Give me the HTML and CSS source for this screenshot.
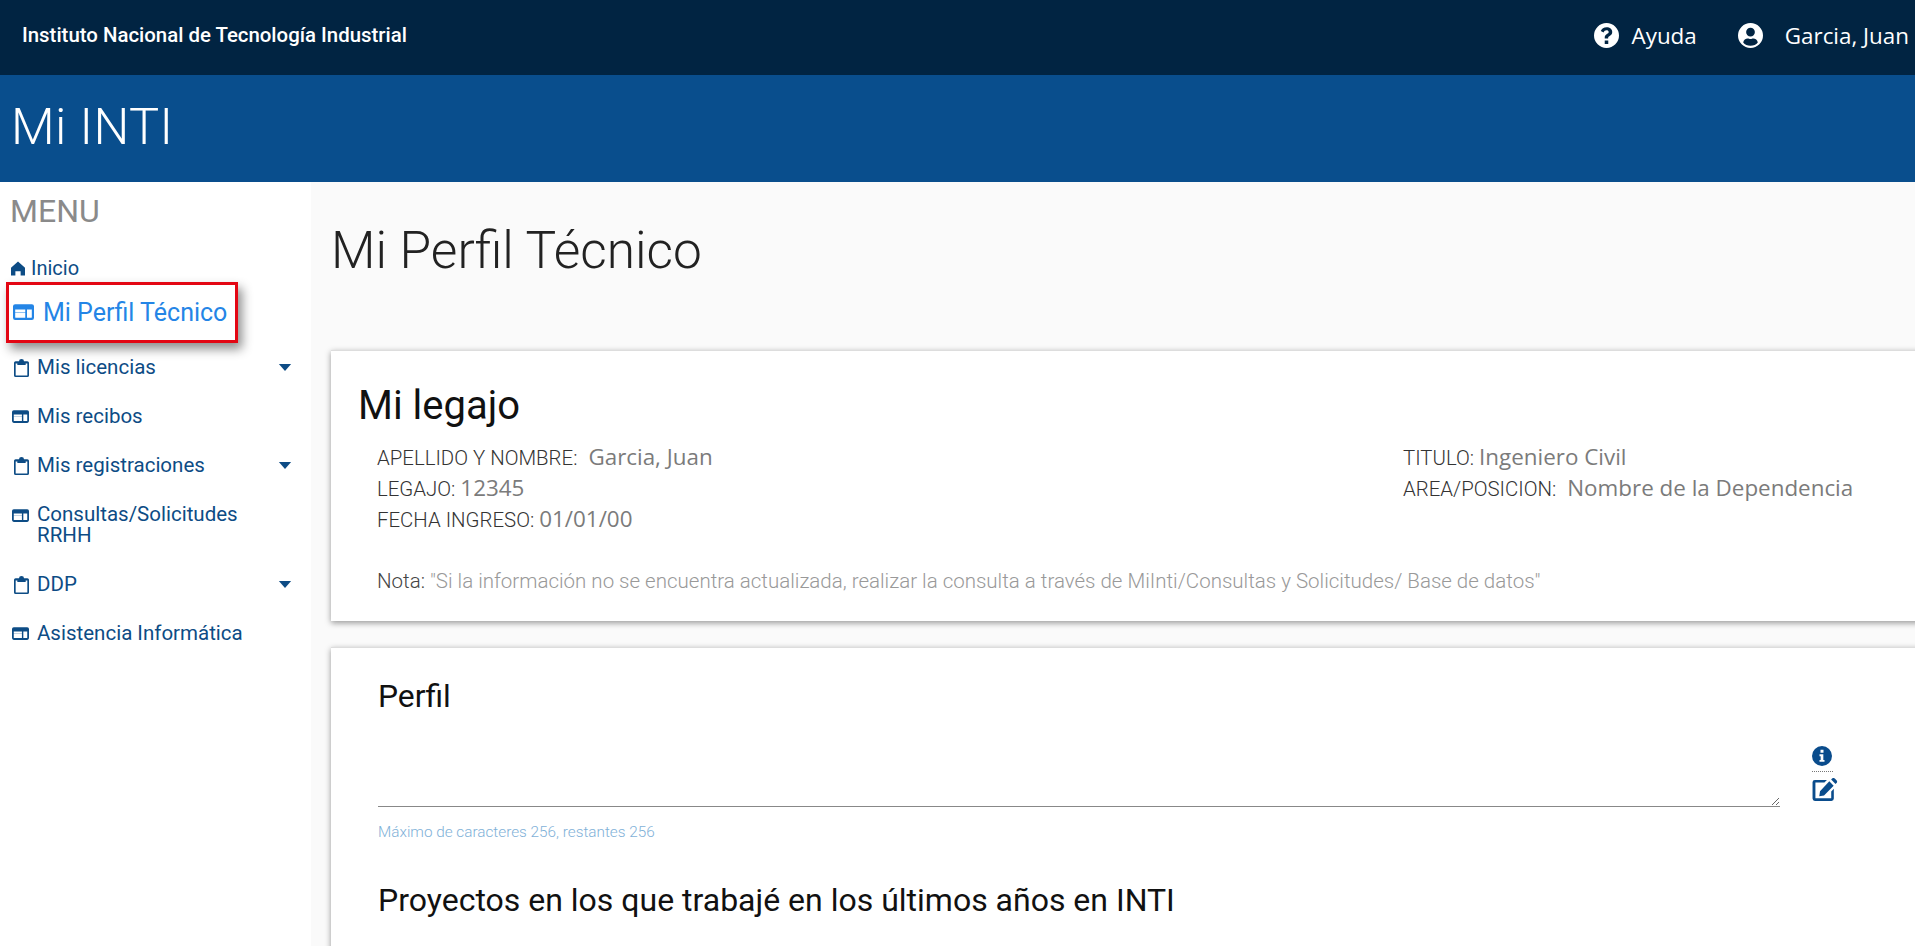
FILE: index.html
```html
<!DOCTYPE html>
<html lang="es">
<head>
<meta charset="utf-8">
<title>Mi INTI</title>
<link rel="stylesheet" href="styles.css">
</head>
<body>
<svg class="defs" width="0" height="0" aria-hidden="true">
  <symbol id="i-window" viewBox="0 0 24 18"><path fill-rule="evenodd" d="M2.5 0h19A2.5 2.5 0 0 1 24 2.5v13a2.5 2.5 0 0 1-2.5 2.500h-19A2.500 2.500 0 0 1 0 15.500v-13A2.500 2.500 0 0 1 2.500 0ZM2.500 6v9a.5.5 0 0 0 .5.500h11V9.500H2.500V9h11.500V6ZM16 6v9.500h5a.5.500 0 0 0 .5-.5V6Z"/></symbol>
  <symbol id="i-clip" viewBox="0 0 18 24" preserveAspectRatio="none"><path fill-rule="evenodd" d="M2 3h4a3 3 0 0 1 6 0h4a2 2 0 0 1 2 2v17a2 2 0 0 1-2 2H2a2 2 0 0 1-2-2V5a2 2 0 0 1 2-2Zm0 3v16h14V6h-2v2H4V6Z"/></symbol>
  <symbol id="i-caret" viewBox="0 0 14 8"><path d="M0 0h14L7 8Z"/></symbol>
</svg>
<header class="topbar">
  <span class="org">Instituto Nacional de Tecnología Industrial</span>
  <nav class="toplinks">
    <a class="toplink">
      <svg class="topicon" viewBox="0 0 24 24"><path fill="#fff" fill-rule="evenodd" d="M12 0a12 12 0 1 1 0 24 12 12 0 0 1 0-24Zm-1.700 16.800v3.400h3.400v-3.400Zm1.900-12.600c-2.900 0-4.800 1.300-5.700 3.600l2.700 1.200c.6-1.300 1.400-2 2.800-2 1.200 0 2.100.6 2.100 1.600 0 .9-.7 1.400-1.700 2-1.300.8-2.100 1.700-2.100 3.400v.9h3.300v-.6c0-.8.500-1.200 1.400-1.800 1.400-.9 2.500-1.900 2.500-3.900 0-2.700-2.300-4.400-5.300-4.400Z"/></svg>
      Ayuda
    </a>
    <a class="toplink toplink-user">
      <svg class="topicon" viewBox="0 0 24 24"><path fill="#fff" fill-rule="evenodd" d="M12 0a12 12 0 1 1 0 24 12 12 0 0 1 0-24Zm0 4.500a4.200 4.200 0 1 0 0 8.400 4.200 4.200 0 0 0 0-8.400ZM5 18.600C6.600 20.600 9.100 21.800 12 21.800s5.400-1.200 7-3.200c-.4-2.200-2.200-3.700-4.400-3.700-.8 0-1.500.5-2.600.5s-1.800-.5-2.600-.5c-2.200 0-4 1.500-4.400 3.700Z"/></svg>
      Garcia, Juan
    </a>
  </nav>
</header>
<div class="brandbar">Mi INTI</div>
<div class="layout">
  <aside class="sidebar">
    <div class="menu-title">MENU</div>
    <ul class="menu">
      <li class="item item-home">
        <svg class="ic-home" viewBox="0 0 16 16"><path d="M8 0 16 7v9h-5v-5H5v5H0V7Z"/></svg>
        <span>Inicio</span>
      </li>
      <li class="item item-active">
        <svg class="ic-win-big"><use href="#i-window"/></svg>
        <span>Mi Perfil Técnico</span>
      </li>
      <li class="item">
        <svg class="ic-clip"><use href="#i-clip"/></svg>
        <span class="grow">Mis licencias</span>
        <svg class="ic-caret"><use href="#i-caret"/></svg>
      </li>
      <li class="item">
        <svg class="ic-win"><use href="#i-window"/></svg>
        <span class="grow">Mis recibos</span>
      </li>
      <li class="item">
        <svg class="ic-clip"><use href="#i-clip"/></svg>
        <span class="grow">Mis registraciones</span>
        <svg class="ic-caret"><use href="#i-caret"/></svg>
      </li>
      <li class="item item-two">
        <svg class="ic-win"><use href="#i-window"/></svg>
        <span class="two-lines">Consultas/Solicitudes RRHH</span>
      </li>
      <li class="item">
        <svg class="ic-clip"><use href="#i-clip"/></svg>
        <span class="grow">DDP</span>
        <svg class="ic-caret"><use href="#i-caret"/></svg>
      </li>
      <li class="item">
        <svg class="ic-win"><use href="#i-window"/></svg>
        <span class="grow">Asistencia Informática</span>
      </li>
    </ul>
  </aside>
  <main class="content">
    <h1 class="page-title">Mi Perfil Técnico</h1>
    <section class="card card-legajo">
      <h2 class="card-title">Mi legajo</h2>
      <div class="info-grid">
        <div class="info-col">
          <p class="info"><span class="lab">APELLIDO Y NOMBRE:</span> <span class="val val-wide">Garcia, Juan</span></p>
          <p class="info"><span class="lab">LEGAJO:</span> <span class="val">12345</span></p>
          <p class="info"><span class="lab">FECHA INGRESO:</span> <span class="val">01/01/00</span></p>
        </div>
        <div class="info-col">
          <p class="info"><span class="lab">TITULO:</span> <span class="val">Ingeniero Civil</span></p>
          <p class="info"><span class="lab">AREA/POSICION:</span> <span class="val val-wide">Nombre de la Dependencia</span></p>
        </div>
      </div>
      <p class="note"><span class="note-lab">Nota:</span> "Si la información no se encuentra actualizada, realizar la consulta a través de MiInti/Consultas y Solicitudes/ Base de datos"</p>
    </section>
    <section class="card card-perfil">
      <h3 class="sub-title">Perfil</h3>
      <div class="field-row">
        <textarea class="field" aria-label="Perfil"></textarea>
        <div class="field-icons">
          <svg class="ic-info" viewBox="0 0 24 24"><path fill="#0a4c8c" fill-rule="evenodd" d="M12 0a12 12 0 1 1 0 24 12 12 0 0 1 0-24Zm-1.800 4.500v3.500h3.600V4.500ZM9 10v2.400h1.400v4.300H9V19h6v-2.300h-1.400V10Z"/></svg>
          <span class="ic-dots"></span>
          <svg class="ic-edit" viewBox="0 0 26 24"><path fill="#0a4c8c" d="M2.500 2H15l-2.600 2.800H3v16.400h16.500V14l2.700-2.800v10.300A2.500 2.500 0 0 1 19.700 24H2.500A2.500 2.500 0 0 1 0 21.500v-17A2.500 2.500 0 0 1 2.500 2Z"/><path fill="#0a4c8c" d="M17.500 3.500 22 8 12 18.200l-5 .8.800-5.200ZM19.400 1.600l1-1a2 2 0 0 1 2.800 0l1.800 1.800a2 2 0 0 1 0 2.800l-1 1Z"/></svg>
        </div>
      </div>
      <p class="hint">Máximo de caracteres 256, restantes 256</p>
      <h3 class="sub-title sub-projects">Proyectos en los que trabajé en los últimos años en INTI</h3>
    </section>
  </main>
</div>
</body>
</html>
```
FILE: styles.css
```css
* { box-sizing: border-box; }
html, body { height: 100%; }
body {
  margin: 0;
  height: 946px;
  overflow: hidden;
  background: #fff;
  font-family: Roboto, "Liberation Sans", sans-serif;
  display: flex;
  flex-direction: column;
}
.defs { position: absolute; }

.topbar {
  flex: 0 0 75px;
  background: #012442;
  color: #fff;
  display: flex;
  align-items: center;
  justify-content: space-between;
  padding: 0 6px 5px 22px;
}
.org { font-size: 20.4px; font-weight: 500; }
.toplinks { display: flex; gap: 41px; }
.toplink {
  display: flex;
  align-items: center;
  gap: 13px;
  font-family: "Open Sans", sans-serif;
  font-size: 22.4px;
}
.toplink-user { gap: 22px; }
.topicon { width: 25px; height: 25px; }

.brandbar {
  flex: 0 0 107px;
  background: #094e8d;
  color: #fff;
  font-size: 50.5px;
  font-weight: 300;
  padding: 0 0 5px 11px;
  display: flex;
  align-items: center;
  letter-spacing: 0.4px;
}

.layout { flex: 1; display: flex; min-height: 0; }

.sidebar { flex: 0 0 311px; padding-top: 12px; }
.menu-title {
  font-size: 32px;
  color: #8a8a8a;
  padding-left: 10px;
  line-height: 34px;
  height: 58px;
}
.menu {
  list-style: none;
  margin: 0;
  padding: 0;
  height: 388px;
  overflow: hidden;
  color: #0d4c85;
  font-size: 20.5px;
}
.item {
  display: flex;
  align-items: center;
  padding: 13px 0 13px 13px;
  line-height: 23px;
  fill: #0d4c85;
}
.item-two { line-height: 21px; padding-top: 14px; padding-bottom: 14px; }
.item-home { padding: 5px 0 2px 11px; font-size: 20px; }
.item-active {
  margin-left: 6px;
  width: 232px;
  height: 61px;
  padding: 0 0 1px 4px;
  border: 3px solid #e30613;
  box-shadow: 4px 6px 10px rgba(0, 0, 0, .45);
  color: #2485e6;
  fill: #2485e6;
  font-size: 25px;
  background: #fff;
}
.grow { flex: 1; }
.two-lines { width: 215px; }
.ic-home { width: 14px; height: 15px; margin-right: 6px; }
.ic-win { width: 17px; height: 13px; margin-right: 8px; margin-left: -1px; align-self: flex-start; margin-top: 5px; }
.item:not(.item-two) .ic-win { align-self: center; margin-top: 0; }
.ic-win-big { width: 21px; height: 16px; margin-right: 9px; }
.ic-clip { width: 15px; height: 18px; margin-left: 1px; margin-right: 8px; }
.ic-caret { width: 14px; height: 7px; margin-right: 19px; }

.content {
  flex: 1;
  min-width: 0;
  background: #fafafa;
  padding-left: 20px;
  overflow: hidden;
}
.page-title {
  margin: 0;
  padding-top: 40px;
  height: 168px;
  font-size: 51.4px;
  font-weight: 300;
  line-height: 58px;
  color: #222;
}
.card {
  background: #fff;
  margin-right: -40px;
  border-top: 1px solid #ddd;
  box-shadow: 0 2px 6px rgba(0, 0, 0, .4);
}
.card-legajo {
  height: 271px;
  padding: 33px 0 0 27px;
  margin-bottom: 26px;
}
.card-title {
  margin: 0;
  font-size: 40px;
  font-weight: 400;
  line-height: 44px;
  color: #111;
}
.info-grid {
  display: grid;
  grid-template-columns: 1026px 1fr;
  padding-left: 19px;
  margin-top: 14px;
}
.info {
  margin: 0;
  line-height: 30px;
  font-size: 20.4px;
  font-weight: 300;
  color: #333;
}
.val { font-family: "Open Sans", sans-serif; font-size: 22.4px; color: #7b7b7b; font-weight: 400; }
.val-wide { margin-left: 6px; }
.note {
  margin: 34px 0 0 19px;
  font-size: 20.5px;
  font-weight: 300;
  line-height: 24px;
  color: #999;
}
.note-lab { color: #444; }

.card-perfil { height: 400px; padding: 30px 0 0 47px; }
.sub-title {
  margin: 0;
  font-size: 31.8px;
  font-weight: 400;
  line-height: 36px;
  color: #111;
}
.field-row { display: flex; align-items: flex-end; margin-top: 14px; }
.field {
  display: block;
  width: 1402px;
  height: 79px;
  border: 0;
  border-bottom: 1px solid #888;
  background: transparent;
  outline: none;
}
.field-icons {
  margin-left: 32px;
  display: flex;
  flex-direction: column;
  align-items: flex-start;
  padding-bottom: 6px;
}
.ic-info { width: 20px; height: 20px; }
.ic-dots { width: 21px; border-top: 1px dotted #777; margin: 5px 0 6px; }
.ic-edit { width: 26px; height: 23px; }
.hint {
  margin: 16px 0 0;
  font-size: 15.3px;
  font-weight: 300;
  line-height: 18px;
  color: #7fb1d8;
}
.sub-projects { margin-top: 41px; font-size: 32px; }
```
